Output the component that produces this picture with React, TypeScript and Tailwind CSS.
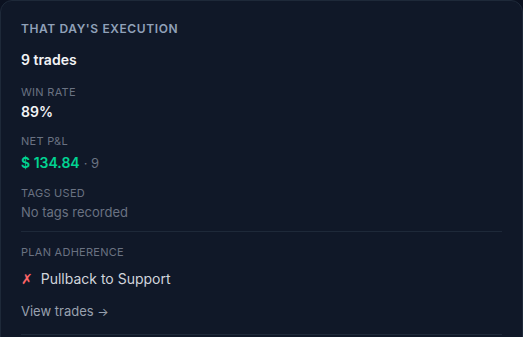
const stats = [
  { label: 'WIN RATE', value: '89%' },
]

function Label({ children }: { children: React.ReactNode }) {
  return <p className="text-[11px] leading-4 tracking-wide text-gray-500">{children}</p>
}

export default function App() {
  return (
    <div className="min-h-screen bg-[#0b1120]" style={{ fontFamily: 'Inter, "Noto Sans", sans-serif' }}>
      <div className="h-[337px] overflow-hidden">
        <div className="rounded-xl border border-gray-800 bg-gray-900 px-5 pt-5 pb-10">
          <h2 className="text-xs leading-4 font-semibold tracking-wider text-slate-400">THAT DAY&apos;S EXECUTION</h2>
          <p className="mt-[13px] text-sm leading-5 font-semibold text-gray-100">9 trades</p>

          {stats.map((s) => (
            <div key={s.label} className="mt-[14px]">
              <Label>{s.label}</Label>
              <p className="mt-[2px] text-sm leading-5 font-semibold text-gray-100">{s.value}</p>
            </div>
          ))}

          <div className="mt-[11px]">
            <Label>NET P&amp;L</Label>
            <p className="mt-1 text-sm leading-5">
              <span className="font-semibold text-emerald-400">$ 134.84</span>
              <span className="ml-1 text-[13px] text-gray-500">· 9</span>
            </p>
          </div>

          <div className="mt-3">
            <Label>TAGS USED</Label>
            <p className="mt-px text-[13px] leading-5 text-gray-500">No tags recorded</p>
          </div>

          <div className="mt-[9px] border-t border-gray-800 pt-3">
            <Label>PLAN ADHERENCE</Label>
            <div className="mt-[9px] flex items-center gap-2 text-sm leading-5">
              <span className="text-red-400" style={{ fontFamily: '"DejaVu Sans", sans-serif' }}>✗</span>
              <span className="text-gray-300">Pullback to Support</span>
            </div>
            <p className="mt-3 text-[13px] leading-5 text-gray-400">
              View trades <span className="text-[12px]">→</span>
            </p>
          </div>

          <div className="mt-[12px] border-t border-gray-800" />
        </div>
      </div>
    </div>
  )
}
